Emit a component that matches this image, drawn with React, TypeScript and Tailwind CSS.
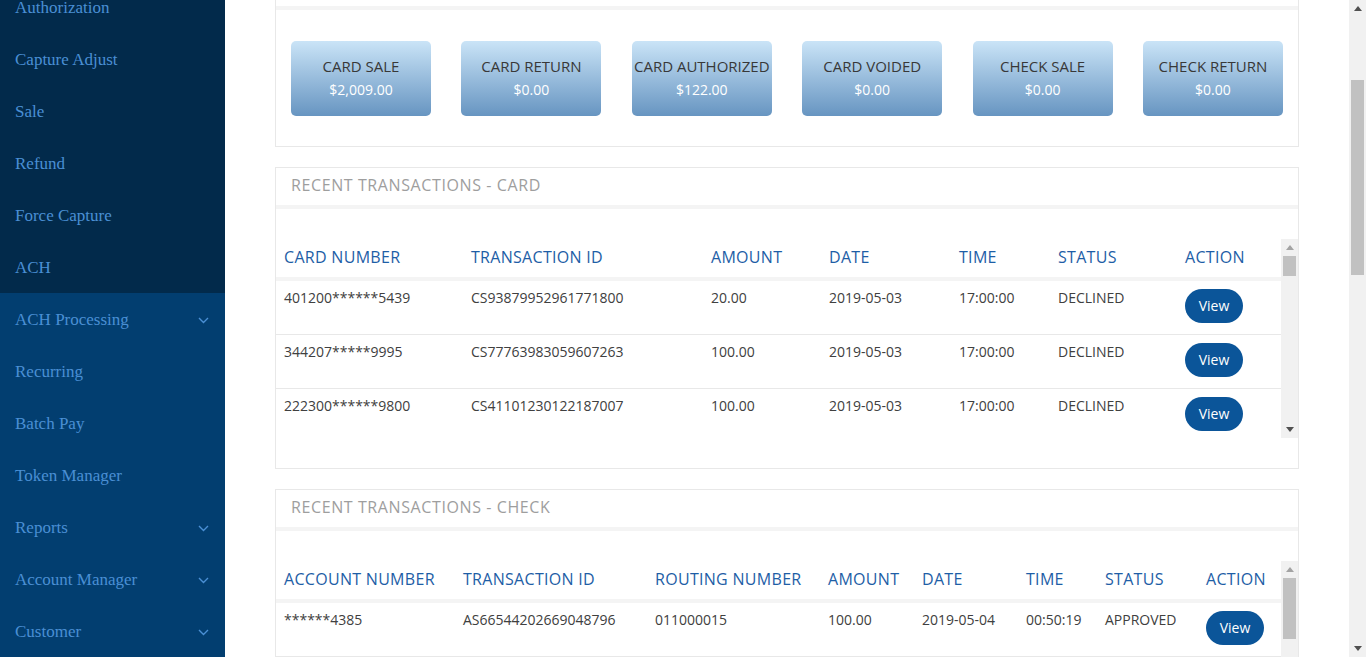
import React from "react";

const sideTop = ["Authorization", "Capture Adjust", "Sale", "Refund", "Force Capture", "ACH"];
const sideBottom: { label: string; chev?: boolean }[] = [
  { label: "ACH Processing", chev: true },
  { label: "Recurring" },
  { label: "Batch Pay" },
  { label: "Token Manager" },
  { label: "Reports", chev: true },
  { label: "Account Manager", chev: true },
  { label: "Customer", chev: true },
];

const tiles = [
  ["CARD SALE", "$2,009.00"],
  ["CARD RETURN", "$0.00"],
  ["CARD AUTHORIZED", "$122.00"],
  ["CARD VOIDED", "$0.00"],
  ["CHECK SALE", "$0.00"],
  ["CHECK RETURN", "$0.00"],
];

const cardCols = [187, 240, 118, 130, 99, 127, 104];
const cardHead = ["CARD NUMBER", "TRANSACTION ID", "AMOUNT", "DATE", "TIME", "STATUS", "ACTION"];
const cardRows = [
  ["401200******5439", "CS93879952961771800", "20.00", "2019-05-03", "17:00:00", "DECLINED"],
  ["344207*****9995", "CS77763983059607263", "100.00", "2019-05-03", "17:00:00", "DECLINED"],
  ["222300******9800", "CS41101230122187007", "100.00", "2019-05-03", "17:00:00", "DECLINED"],
];

const checkCols = [179, 192, 173, 94, 104, 79, 101, 83];
const checkHead = ["ACCOUNT NUMBER", "TRANSACTION ID", "ROUTING NUMBER", "AMOUNT", "DATE", "TIME", "STATUS", "ACTION"];
const checkRows = [["******4385", "AS66544202669048796", "011000015", "100.00", "2019-05-04", "00:50:19", "APPROVED"]];

const font = { fontFamily: '"Open Sans", "Noto Sans", sans-serif' };

function Chevron() {
  return (
    <svg width="11" height="7" viewBox="0 0 11 7" fill="none">
      <path d="M1 1 L5.5 5.5 L10 1" stroke="#4a8fd4" strokeWidth="1.4" />
    </svg>
  );
}

function UpArrow({ color }: { color: string }) {
  return (
    <svg width="8" height="5" viewBox="0 0 8 5">
      <path d="M0 5 L4 0 L8 5 Z" fill={color} />
    </svg>
  );
}
function DownArrow({ color }: { color: string }) {
  return (
    <svg width="8" height="5" viewBox="0 0 8 5">
      <path d="M0 0 L4 5 L8 0 Z" fill={color} />
    </svg>
  );
}

function InnerScroll({ thumbH }: { thumbH: number }) {
  return (
    <div className="w-[17px] shrink-0 bg-[#f1f1f1] flex flex-col items-center relative">
      <div className="h-[17px] flex items-center justify-center">
        <UpArrow color="#a3a3a3" />
      </div>
      <div className="w-[13px] bg-[#c1c1c1]" style={{ height: thumbH }} />
      <div className="absolute bottom-0 left-0 w-[17px] h-[17px] flex items-center justify-center">
        <DownArrow color="#505050" />
      </div>
    </div>
  );
}

function ViewBtn() {
  return (
    <button className="w-[58px] h-[34px] rounded-full bg-[#0b5599] text-white text-[14px] leading-none">
      View
    </button>
  );
}

function Table({
  cols,
  head,
  rows,
  height,
  thumbH,
}: {
  cols: number[];
  head: string[];
  rows: string[][];
  height: number;
  thumbH: number;
}) {
  return (
    <div className="flex overflow-hidden" style={{ height }}>
      <div className="flex-1 min-w-0">
        <div className="flex h-[36px] items-center pb-[2px] box-content border-b-4 border-[#f4f4f4]">
          {head.map((h, i) => (
            <div
              key={h}
              className="px-2 text-[16px] tracking-[0.3px] leading-5 text-[#1e5ea6] whitespace-nowrap"
              style={{ width: cols[i] }}
            >
              {h}
            </div>
          ))}
        </div>
        {rows.map((r, ri) => (
          <div key={ri} className="flex h-[54px] border-b border-[#e8e8e8] box-border">
            {r.map((c, i) => (
              <div
                key={i}
                className="px-2 pt-[7px] text-[14px] leading-5 text-[#404040] whitespace-nowrap"
                style={{ width: cols[i] }}
              >
                {c}
              </div>
            ))}
            <div className="px-2 pt-[8px]" style={{ width: cols[cols.length - 1] }}>
              <ViewBtn />
            </div>
          </div>
        ))}
      </div>
      <InnerScroll thumbH={thumbH} />
    </div>
  );
}

function PanelTitle({ children }: { children: React.ReactNode }) {
  return (
    <div className="h-[37px] flex items-center pb-[3px] pl-[15px] text-[16px] tracking-[0.6px] text-[#9e9e9e]">
      {children}
    </div>
  );
}

export default function App() {
  return (
    <div className="flex h-[657px] w-[1366px] overflow-hidden bg-white" style={font}>
      <aside
        className="w-[225px] shrink-0 flex flex-col bg-[#023e70]"
        style={{ fontFamily: '"Liberation Serif", "Times New Roman", serif' }}
      >
        <div className="bg-[#022a4b] -mt-[19px]">
          {sideTop.map((s) => (
            <div key={s} className="h-[52px] flex items-center pt-[2px] pl-[15px] text-[17px] text-[#4a8fd4]">
              {s}
            </div>
          ))}
        </div>
        {sideBottom.map((s) => (
          <div
            key={s.label}
            className="h-[52px] shrink-0 flex items-center justify-between pt-[2px] pl-[15px] pr-[16px] text-[17px] text-[#4a8fd4]"
          >
            <span>{s.label}</span>
            {s.chev && <Chevron />}
          </div>
        ))}
      </aside>

      <main className="flex-1 min-w-0 px-[50px]">
        <div className="-mt-[32px] flex flex-col gap-[20px]">
          <section className="border border-[#e8e8e8]">
            <div className="h-[37px]" />
            <div className="h-[4px] bg-[#f4f4f4]" />
            <div className="px-[15px] pt-[31px] pb-[30px] flex justify-between">
              {tiles.map(([t, v]) => (
                <div
                  key={t}
                  className="w-[140px] h-[75px] rounded-[5px] bg-gradient-to-b from-[#cae4f7] to-[#6795c1] flex flex-col items-center justify-center"
                >
                  <div className="text-[15px] leading-[21px] text-[#383838] whitespace-nowrap">{t}</div>
                  <div className="text-[14px] leading-[22px] pt-[2px] text-white">{v}</div>
                </div>
              ))}
            </div>
          </section>

          <section className="border border-[#e8e8e8]">
            <PanelTitle>RECENT TRANSACTIONS - CARD</PanelTitle>
            <div className="h-[4px] bg-[#f4f4f4]" />
            <div className="pt-[30px] pb-[30px]">
              <Table cols={cardCols} head={cardHead} rows={cardRows} height={199} thumbH={20} />
            </div>
          </section>

          <section className="border border-[#e8e8e8]">
            <PanelTitle>RECENT TRANSACTIONS - CHECK</PanelTitle>
            <div className="h-[4px] bg-[#f4f4f4]" />
            <div className="pt-[30px] pb-[30px]">
              <Table cols={checkCols} head={checkHead} rows={checkRows} height={199} thumbH={61} />
            </div>
          </section>
        </div>
      </main>

      <div className="w-[17px] shrink-0 bg-[#f1f1f1] relative flex flex-col items-center">
        <div className="h-[17px] flex items-center justify-center">
          <UpArrow color="#505050" />
        </div>
        <div className="w-[13px] h-[195px] bg-[#c1c1c1] mt-[63px]" />
        <div className="absolute bottom-0 left-0 w-[17px] h-[17px] flex items-center justify-center">
          <DownArrow color="#505050" />
        </div>
      </div>
    </div>
  );
}
